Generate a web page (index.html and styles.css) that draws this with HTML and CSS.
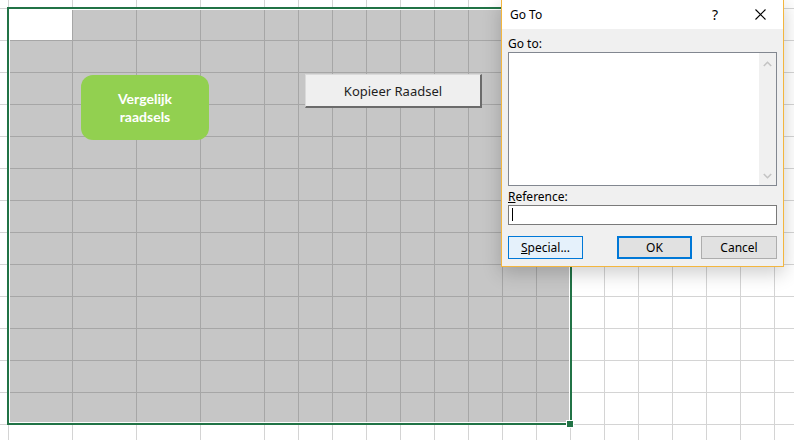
FILE: index.html
```html
<!DOCTYPE html>
<html lang="nl">
<head>
  <meta charset="UTF-8">
  <title>Raadsels</title>
  <link rel="stylesheet" href="styles.css">
</head>
<body>
  <div class="sheet">
    <div class="selection">
      <div class="sel-fill"></div>
      <span class="fill-handle"></span>
    </div>

    <div class="shape-btn">Vergelijk<br>raadsels</div>
    <button class="form-btn">Kopieer Raadsel</button>

    <div class="dialog">
      <div class="dialog-title">
        <span class="title-text">Go To</span>
        <span class="title-help">?</span>
        <span class="title-close">
          <svg width="11" height="11" viewBox="0 0 11 11"><path d="M0.5 0.5 L10.5 10.5 M10.5 0.5 L0.5 10.5" stroke="#000" stroke-width="1.1" fill="none"/></svg>
        </span>
      </div>
      <div class="dialog-body">
        <label class="field-label">Go to:</label>
        <div class="listbox">
          <div class="list-items"></div>
          <div class="scrollbar">
            <svg width="9" height="6" viewBox="0 0 9 6"><path d="M0.8 5 L4.5 1.3 L8.2 5" stroke="#c4c4c4" stroke-width="1.6" fill="none"/></svg>
            <svg width="9" height="6" viewBox="0 0 9 6"><path d="M0.8 1 L4.5 4.7 L8.2 1" stroke="#c4c4c4" stroke-width="1.6" fill="none"/></svg>
          </div>
        </div>
        <label class="field-label ref-label"><u>R</u>eference:</label>
        <div class="textbox"><span class="caret"></span></div>
        <div class="button-row">
          <button class="dlg-btn special"><u>S</u>pecial...</button>
          <button class="dlg-btn ok">OK</button>
          <button class="dlg-btn cancel">Cancel</button>
        </div>
      </div>
    </div>
  </div>
</body>
</html>
```

FILE: styles.css
```css
* {
    margin: 0;
    padding: 0;
    box-sizing: border-box;
}
body {
    width: 794px;
    height: 440px;
    overflow: hidden;
    background: #fff;
    font-family: "Noto Sans", "Liberation Sans", sans-serif;
}

/* werkblad met rasterlijnen */
.sheet {
    position: relative;
    width: 794px;
    height: 440px;
    overflow: hidden;
    background-color: #fff;
    background-image:
        linear-gradient(#d4d4d4 1px, transparent 1px),
        repeating-linear-gradient(to right, #d4d4d4 0 1px, transparent 1px 64px),
        repeating-linear-gradient(to right, #d4d4d4 0 1px, transparent 1px 34px);
    background-size: 100% 32px, 256px 100%, 530px 100%;
    background-position: 0 8px, 8px 0, 264px 0;
    background-repeat: repeat, no-repeat, no-repeat;
}

/* selectie A1:Q13 */
.selection {
    position: absolute;
    left: 7px;
    top: 7px;
    width: 565px;
    height: 418px;
    border: 2px solid #217346;
    padding: 1px;
    background: #fff;
}
.sel-fill {
    height: 100%;
    background-color: #c6c6c6;
    background-image:
        linear-gradient(#fff, #fff),
        linear-gradient(#a6a6a6 1px, transparent 1px),
        repeating-linear-gradient(to right, #a6a6a6 0 1px, transparent 1px 64px),
        repeating-linear-gradient(to right, #a6a6a6 0 1px, transparent 1px 34px);
    background-size: 62px 30px, 100% 32px, 192px 100%, 305px 100%;
    background-position: 0 0, 0 30px, 62px 0, 254px 0;
    background-repeat: no-repeat, repeat, no-repeat, no-repeat;
}
.fill-handle {
    position: absolute;
    left: 557px;
    top: 411px;
    width: 8px;
    height: 8px;
    background: #217346;
    border: 1px solid #fff;
}

/* knoppen op het werkblad */
.shape-btn {
    position: absolute;
    left: 81px;
    top: 75px;
    width: 128px;
    height: 65px;
    border-radius: 12px;
    background: #92d050;
    color: #fff;
    font-family: Lato, "Liberation Sans", sans-serif;
    font-weight: bold;
    font-size: 14px;
    line-height: 18px;
    text-align: center;
    display: flex;
    align-items: center;
    justify-content: center;
}
.form-btn {
    position: absolute;
    left: 305px;
    top: 74px;
    width: 177px;
    height: 34px;
    background: #efefef;
    border: 1px solid #dadada;
    border-right: 2px solid #6b6b6b;
    border-bottom: 2px solid #6b6b6b;
    font-family: "Noto Sans", "Liberation Sans", sans-serif;
    font-size: 13px;
    color: #1e1e1e;
}

/* Ga naar venster */
.dialog {
    position: absolute;
    left: 501px;
    top: -1px;
    width: 283px;
    border: 1px solid #f3b63f;
    background: #f0f0f0;
    box-shadow: 0 6px 18px rgba(0, 0, 0, 0.2);
    font-size: 12px;
    color: #000;
}
.dialog-title {
    height: 29px;
    background: #fff;
    display: flex;
    align-items: center;
    padding-left: 8px;
}
.title-text {
    flex: 1;
}
.title-help {
    font-size: 14px;
    width: 12px;
    margin-right: 31px;
}
.title-close {
    display: flex;
    width: 11px;
    margin-right: 17px;
}
.dialog-body {
    padding: 7px 6px 7px 6px;
}
.field-label {
    display: block;
    height: 15px;
    line-height: 15px;
    margin-bottom: 1px;
}
.ref-label {
    margin-top: 3px;
}
.listbox {
    height: 134px;
    border: 1px solid #828790;
    background: #fff;
    display: flex;
}
.list-items {
    flex: 1;
}
.scrollbar {
    width: 17px;
    background: #f0f0f0;
    display: flex;
    flex-direction: column;
    justify-content: space-between;
    align-items: center;
    padding: 8px 0 6px;
}
.textbox {
    height: 20px;
    border: 1px solid #7a7a7a;
    background: #fff;
    padding: 2px 3px;
}
.caret {
    display: block;
    width: 1px;
    height: 13px;
    background: #000;
}
.button-row {
    display: flex;
    margin-top: 11px;
}
.dlg-btn {
    height: 23px;
    width: 75px;
    font-family: "Noto Sans", "Liberation Sans", sans-serif;
    font-size: 12px;
    color: #000;
    background: #e1e1e1;
    border: 1px solid #adadad;
}
.special {
    background: #e5f1fb;
    border-color: #0078d7;
}
.ok {
    margin-left: auto;
    border: 2px solid #0078d7;
}
.cancel {
    width: 76px;
    margin-left: 9px;
}
```
